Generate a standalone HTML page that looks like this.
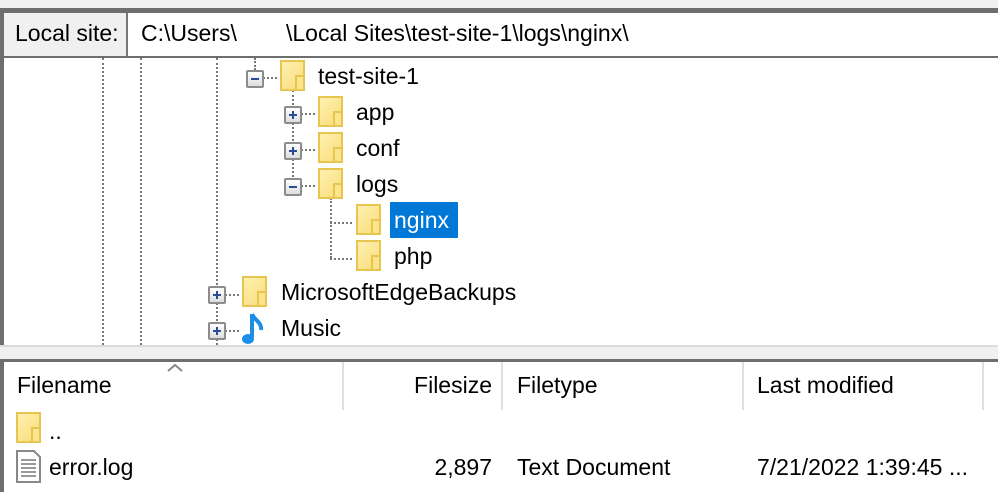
<!DOCTYPE html>
<html><head><meta charset="utf-8"><style>
*{margin:0;padding:0;box-sizing:border-box}
body{width:998px;height:492px;overflow:hidden;background:#fff;font-family:"Liberation Sans",sans-serif;font-size:23px;color:#000;position:relative}
.a{position:absolute;white-space:nowrap}
.vd{position:absolute;width:0;border-left:2px dotted #777}
.hd{position:absolute;height:0;border-top:2px dotted #777}
.fold{position:absolute;width:25px;height:31px;background:linear-gradient(135deg,#fff1b0,#f9dc7a);border:2px solid #e8c550}
.fold:after{content:"";position:absolute;right:-2px;bottom:-2px;width:6px;height:12px;border:2px solid #e8c550;background:#fbe48c}
.ex{position:absolute;width:18px;height:18px;border:2px solid #8c8c8c;border-radius:2px;background:linear-gradient(#fff,#ddd)}
.ex:before{content:"";position:absolute;left:3px;top:6px;width:8px;height:2px;background:#2a4a9a}
.ex.p:after{content:"";position:absolute;left:6px;top:3px;width:2px;height:8px;background:#2a4a9a}
</style></head><body>
<div class="a" style="left:0;top:0;width:998px;height:8px;background:#f0f0f0"></div>
<div class="a" style="left:0;top:8px;width:998px;height:5px;background:#6e6e6e"></div>
<div class="a" style="left:0;top:8px;width:4px;height:340px;background:#6e6e6e"></div>
<div class="a" style="left:4px;top:13px;width:124px;height:44px;background:#f0f0f0;border-right:2px solid #777"></div>
<div class="a" style="left:15px;top:20px">Local site:</div>
<div class="a" style="left:141px;top:20px">C:\Users\</div>
<div class="a" style="left:286px;top:20px">\Local Sites\test-site-1\logs\nginx\</div>
<div class="a" style="left:4px;top:56px;width:994px;height:2px;background:#6e6e6e"></div>

<div class="vd" style="left:102px;top:58px;height:287px"></div>
<div class="vd" style="left:140px;top:58px;height:287px"></div>
<div class="vd" style="left:216px;top:58px;height:287px"></div>
<div class="vd" style="left:254px;top:58px;height:12px"></div>
<div class="vd" style="left:292px;top:90px;height:95px"></div>
<div class="vd" style="left:330px;top:198px;height:60px"></div>
<div class="hd" style="left:263px;top:77px;width:14px"></div>
<div class="hd" style="left:301px;top:113px;width:14px"></div>
<div class="hd" style="left:301px;top:149px;width:14px"></div>
<div class="hd" style="left:301px;top:185px;width:14px"></div>
<div class="hd" style="left:330px;top:222px;width:22px"></div>
<div class="hd" style="left:330px;top:258px;width:22px"></div>
<div class="hd" style="left:225px;top:294px;width:14px"></div>
<div class="hd" style="left:225px;top:330px;width:14px"></div>

<div class="ex" style="left:246px;top:70px"></div>
<div class="fold" style="left:280px;top:60px"></div>
<div class="a" style="left:318px;top:63px">test-site-1</div>
<div class="ex p" style="left:284px;top:106px"></div>
<div class="fold" style="left:318px;top:96px"></div>
<div class="a" style="left:356px;top:99px">app</div>
<div class="ex p" style="left:284px;top:142px"></div>
<div class="fold" style="left:318px;top:132px"></div>
<div class="a" style="left:356px;top:135px">conf</div>
<div class="ex" style="left:284px;top:178px"></div>
<div class="fold" style="left:318px;top:168px"></div>
<div class="a" style="left:356px;top:171px">logs</div>
<div class="fold" style="left:356px;top:204px"></div>
<div class="a" style="left:390px;top:202px;width:68px;height:36px;background:#0078d7"></div>
<div class="a" style="left:394px;top:207px;color:#fff">nginx</div>
<div class="fold" style="left:356px;top:240px"></div>
<div class="a" style="left:394px;top:243px">php</div>
<div class="ex p" style="left:208px;top:286px"></div>
<div class="fold" style="left:242px;top:276px"></div>
<div class="a" style="left:281px;top:279px">MicrosoftEdgeBackups</div>
<div class="ex p" style="left:208px;top:322px"></div>
<svg class="a" style="left:240px;top:312px" width="28" height="34" viewBox="0 0 28 34"><path d="M12 2v23" stroke="#1a8ee8" stroke-width="4"/><ellipse cx="8" cy="27" rx="6" ry="5" fill="#1a8ee8"/><path d="M12 2c2 6 10 8 9 16" stroke="#1a8ee8" stroke-width="4" fill="none"/></svg>
<div class="a" style="left:281px;top:315px">Music</div>

<div class="a" style="left:0;top:345px;width:998px;height:15px;background:#f0f0f0;border-top:2px solid #dcdcdc"></div>
<div class="a" style="left:0;top:359px;width:998px;height:3px;background:#6e6e6e"></div>
<div class="a" style="left:0;top:359px;width:4px;height:133px;background:#6e6e6e"></div>
<svg class="a" style="left:166px;top:362px" width="18" height="10"><path d="M2 9l7-6 7 6" stroke="#888" stroke-width="2" fill="none"/></svg>
<div class="a" style="left:342px;top:362px;width:2px;height:48px;background:#e0e0e0"></div>
<div class="a" style="left:501px;top:362px;width:2px;height:48px;background:#e0e0e0"></div>
<div class="a" style="left:742px;top:362px;width:2px;height:48px;background:#e0e0e0"></div>
<div class="a" style="left:982px;top:362px;width:2px;height:48px;background:#e0e0e0"></div>
<div class="a" style="left:17px;top:372px">Filename</div>
<div class="a" style="left:343px;top:372px;width:149px;text-align:right">Filesize</div>
<div class="a" style="left:517px;top:372px">Filetype</div>
<div class="a" style="left:757px;top:372px">Last modified</div>
<div class="fold" style="left:16px;top:412px"></div>
<div class="a" style="left:49px;top:418px">..</div>
<svg class="a" style="left:16px;top:450px" width="25" height="33" viewBox="0 0 25 33"><path d="M1 1h17l6 6v25H1z" fill="#fff" stroke="#888" stroke-width="2"/><path d="M5 10h15M5 14h15M5 18h15M5 22h15M5 26h15" stroke="#999" stroke-width="2"/></svg>
<div class="a" style="left:49px;top:454px">error.log</div>
<div class="a" style="left:343px;top:454px;width:149px;text-align:right">2,897</div>
<div class="a" style="left:517px;top:454px">Text Document</div>
<div class="a" style="left:757px;top:454px">7/21/2022 1:39:45 ...</div>
</body></html>
